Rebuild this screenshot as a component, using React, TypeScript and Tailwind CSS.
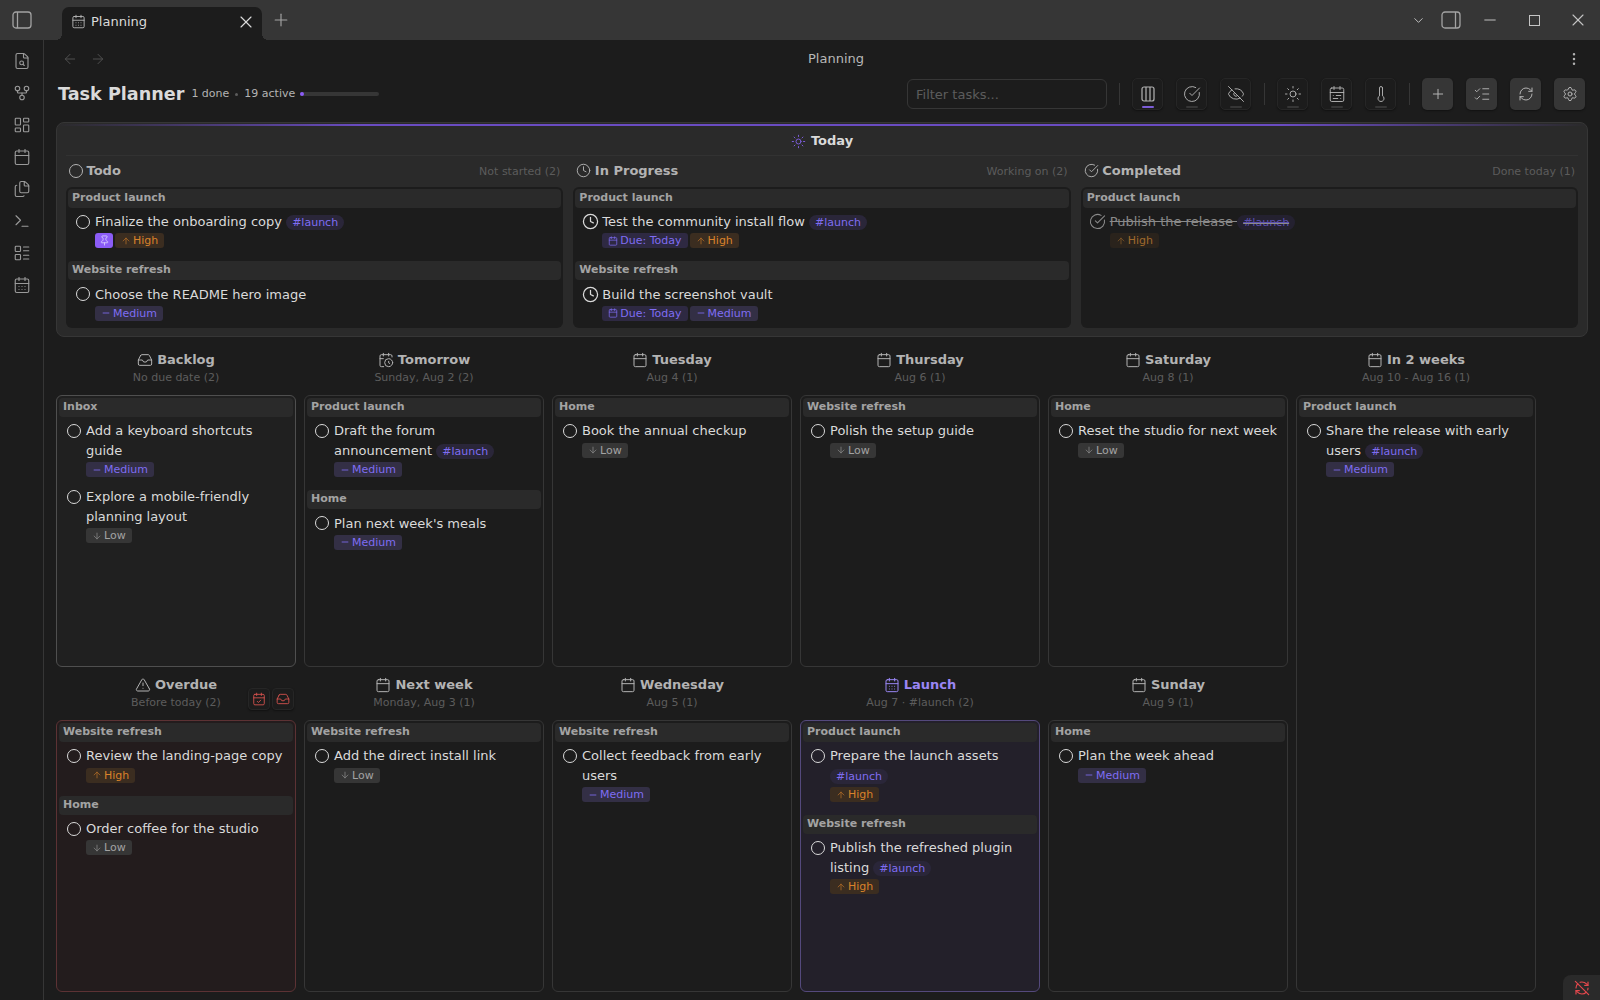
import * as React from "react";
import {
  AlertTriangle,
  ArrowDown,
  ArrowLeft,
  ArrowRight,
  ArrowUp,
  Calendar,
  CalendarCheck,
  CalendarClock,
  CalendarDays,
  CalendarRange,
  ChevronDown,
  CircleCheckBig,
  Clock,
  EllipsisVertical,
  EyeOff,
  FileSearch,
  Files,
  GitFork,
  Inbox,
  LayoutDashboard,
  LayoutList,
  ListChecks,
  Minus,
  Pin,
  Plus,
  RefreshCw,
  RefreshCwOff,
  Settings,
  Sun,
  Terminal,
  Thermometer,
  X,
} from "lucide-react";

type Tag =
  | { kind: "high" | "medium" | "low" | "pin" }
  | { kind: "due"; label: string };

type Task = {
  text: string;
  hash?: boolean;
  tags: Tag[];
  status?: "todo" | "doing" | "done";
};

type Group = { name: string; tasks: Task[] };

const high: Tag = { kind: "high" };
const medium: Tag = { kind: "medium" };
const low: Tag = { kind: "low" };
const due: Tag = { kind: "due", label: "Due: Today" };

function PriorityTag({ tag, dim }: { tag: Tag; dim?: boolean }) {
  const base = "inline-flex h-[15px] items-center gap-[2px] rounded-[3px] px-[6px] text-[11px] leading-none";
  if (tag.kind === "pin") {
    return (
      <span className="inline-flex h-[15px] w-[18px] items-center justify-center rounded-[3px] bg-[#8b5cf6] text-[#ddd6fe]">
        <Pin size={11} strokeWidth={1.75} />
      </span>
    );
  }
  if (tag.kind === "due") {
    return (
      <span className={`${base} bg-[#2e2942] text-[#7f6df2]`}>
        <Calendar size={10} strokeWidth={1.75} />
        {tag.label}
      </span>
    );
  }
  if (tag.kind === "high") {
    return (
      <span className={`${base} ${dim ? "bg-[#2a231c] text-[#a06a2c]" : "bg-[#3b2d20] text-[#d9822b]"}`}>
        <ArrowUp size={10} strokeWidth={1.75} className="opacity-80" />
        High
      </span>
    );
  }
  if (tag.kind === "medium") {
    return (
      <span className={`${base} bg-[#332f45] text-[#7f6df2]`}>
        <Minus size={10} strokeWidth={2} />
        Medium
      </span>
    );
  }
  return (
    <span className={`${base} bg-[#363636] text-[#a3a3a3]`}>
      <ArrowDown size={10} strokeWidth={1.75} className="opacity-80" />
      Low
    </span>
  );
}

function StatusMark({ status }: { status?: Task["status"] }) {
  if (status === "doing") {
    return <Clock size={17} strokeWidth={1.75} className="absolute left-[6.5px] top-[1.5px] text-[#dadada]" />;
  }
  if (status === "done") {
    return <CircleCheckBig size={17} strokeWidth={1.5} className="absolute left-[6.5px] top-[1.5px] text-[#8a8a8a]" />;
  }
  return <span className="absolute left-[8px] top-[3px] size-[14px] rounded-full border-[1.5px] border-[#dadada]" />;
}

function TaskRow({ task, later }: { task: Task; later?: boolean }) {
  const done = task.status === "done";
  return (
    <div className="relative pb-[6px] pl-[27px] pr-[7px] pt-[4px]">
      <div className="relative">
        <div className="absolute -left-[27px] top-0 size-[20px]">
          <StatusMark status={task.status} />
        </div>
        <div
          className={`relative text-[13px] leading-[19.5px] ${later ? "top-[0.5px]" : ""} ${
            done ? "text-[#8a8a8a] line-through" : "text-[#dadada]"
          }`}
        >
          {task.text}
          {task.hash ? " " : ""}
          {task.hash ? (
            <span
              className={`rounded-full px-[6px] py-[1px] text-[11px] leading-none ${
                done ? "bg-[#242130] text-[#5d4fb0] line-through" : "bg-[#2a2639] text-[#7f6df2]"
              }`}
            >
              #launch
            </span>
          ) : null}
        </div>
        <div className="mt-[2px] flex gap-[2px]">
          {task.tags.map((t, i) => (
            <PriorityTag key={i} tag={t} dim={done} />
          ))}
        </div>
      </div>
    </div>
  );
}

function GroupBlock({ group, later }: { group: Group; later?: boolean }) {
  return (
    <div className="mb-[7px]">
      <div className="flex h-[19px] items-center rounded-[4px] bg-[#2a2a2a] px-[4px] text-[11px] font-bold text-[#a3a3a3]">
        {group.name}
      </div>
      {group.tasks.map((t) => (
        <TaskRow key={t.text} task={t} later={later} />
      ))}
    </div>
  );
}

function Board({ groups, tone }: { groups: Group[]; tone?: "hover" | "late" | "launch" }) {
  const toneClass =
    tone === "hover"
      ? "border-[#4f4f4f] bg-[#202020]"
      : tone === "late"
        ? "border-[#5c3234] bg-[#231c1d]"
        : tone === "launch"
          ? "border-[#54497c] bg-[#23202a]"
          : "border-[#363636] bg-[#1c1c1c]";
  return (
    <div className={`min-h-0 flex-1 rounded-[6px] border p-[2px] ${toneClass}`}>
      {groups.map((g, i) => (
        <GroupBlock key={g.name} group={g} later={i > 0 && tone !== "launch"} />
      ))}
    </div>
  );
}

function DayColumn({
  icon,
  title,
  sub,
  groups,
  tone,
  accent,
  className,
  children,
}: {
  icon: React.ReactNode;
  title: string;
  sub: string;
  groups: Group[];
  tone?: "hover" | "late" | "launch";
  accent?: boolean;
  className?: string;
  children?: React.ReactNode;
}) {
  return (
    <div className={`relative flex min-h-0 flex-col ${className ?? ""}`}>
      <div className="flex h-[53px] flex-col items-center pt-[8.9px]">
        <div
          className={`flex h-[18px] items-center gap-[4px] text-[13px] font-bold ${
            accent ? "text-[#9a86f5]" : "text-[#b3b3b3]"
          }`}
        >
          {icon}
          {title}
        </div>
        <div className="mt-[0.6px] h-[16px] text-[11px] leading-[16px] text-[#5c5c5c]">{sub}</div>
      </div>
      {children}
      <Board groups={groups} tone={tone} />
    </div>
  );
}

function TodayColumn({
  icon,
  title,
  sub,
  groups,
}: {
  icon: React.ReactNode;
  title: string;
  sub: string;
  groups: Group[];
}) {
  return (
    <div className="flex min-w-0 flex-1 flex-col">
      <div className="flex h-[30.6px] items-center justify-between pl-[3px] pr-[3px]">
        <div className="flex items-center gap-[3.5px] pb-[1.5px] text-[13px] font-bold text-[#b3b3b3]">
          {icon}
          {title}
        </div>
        <div className="mt-[1px] text-[11px] text-[#5c5c5c]">{sub}</div>
      </div>
      <div className="h-[141px] rounded-[6px] bg-[#1c1c1c] p-[2px]">
        {groups.map((g, i) => (
          <GroupBlock key={g.name} group={g} later={i > 0} />
        ))}
      </div>
    </div>
  );
}

function ColumnsIcon() {
  return (
    <svg width="14" height="18" viewBox="0 0 14 18" fill="none" stroke="currentColor" strokeWidth="1.2">
      <rect x="1" y="2" width="12" height="14" rx="2" />
      <path d="M5 2v14M9 2v14" />
    </svg>
  );
}

function PaneIcon({ side }: { side: "left" | "right" }) {
  const x = side === "left" ? 5.5 : 14.5;
  return (
    <svg width="20" height="18" viewBox="0 0 20 18" fill="none" stroke="currentColor" strokeWidth="1.3">
      <rect x="1" y="1" width="18" height="16" rx="3" />
      <path d={`M${x} 1v16`} />
    </svg>
  );
}

function ToggleButton({ icon, active }: { icon: React.ReactNode; active?: boolean }) {
  return (
    <div className="relative flex h-[32px] w-[31px] items-center justify-center rounded-[5px] border border-[#262626] bg-[#1c1c1c] pb-[1px] text-[#b3b3b3] shadow-[0_1px_2px_rgba(0,0,0,0.4)]">
      {icon}
      <span
        className={`absolute bottom-[1px] left-[9px] h-[2px] w-[12px] rounded-full ${
          active ? "bg-[#7b5cd6]" : "bg-[#363636]"
        }`}
      />
    </div>
  );
}

function ActionButton({ icon }: { icon: React.ReactNode }) {
  return (
    <div className="flex h-[32px] w-[31px] items-center justify-center rounded-[5px] bg-[#363636] text-[#b3b3b3] shadow-[0_1px_2px_rgba(0,0,0,0.4)]">
      {icon}
    </div>
  );
}

function Divider() {
  return <div className="h-[22px] w-px bg-[#363636]" />;
}

const ribbon = [FileSearch, GitFork, LayoutDashboard, Calendar, Files, Terminal, LayoutList, CalendarDays];

export default function App() {
  const cal = <Calendar size={16} strokeWidth={1.5} />;
  return (
    <div className="relative flex h-[1000px] w-[1600px] flex-col overflow-hidden bg-[#1c1c1c] font-['DejaVu_Sans',sans-serif]">
      {/* title bar */}
      <div className="flex h-[40px] shrink-0 items-end bg-[#363636]">
        <div className="flex h-[40px] w-[62px] items-center justify-center pr-[18px] text-[#a3a3a3]">
          <PaneIcon side="left" />
        </div>
        <div className="relative flex h-[33px] w-[200px] items-center rounded-t-[7px] bg-[#1c1c1c] pb-[4px] pl-[9px] pr-[6px] text-[#dadada]">
          <span className="absolute -left-[6px] bottom-0 size-[6px] bg-[radial-gradient(circle_at_0_0,transparent_6px,#1c1c1c_6px)]" />
          <span className="absolute -right-[6px] bottom-0 size-[6px] bg-[radial-gradient(circle_at_100%_0,transparent_6px,#1c1c1c_6px)]" />
          <CalendarDays size={15} strokeWidth={1.5} className="text-[#b3b3b3]" />
          <span className="ml-[5px] flex-1 text-[13px]">Planning</span>
          <X size={20} strokeWidth={1.4} />
        </div>
        <div className="flex h-[40px] w-[38px] items-center justify-center text-[#a3a3a3]">
          <Plus size={20} strokeWidth={1.4} />
        </div>
        <div className="flex h-[40px] flex-1 items-center justify-end text-[#c4c4c4]">
          <ChevronDown size={15} strokeWidth={1.5} className="mr-[15px]" />
          <div className="mr-[20px] text-[#a3a3a3]">
            <PaneIcon side="right" />
          </div>
          <Minus size={18} strokeWidth={1.3} className="mr-[30px]" />
          <span className="mr-[28px] size-[11px] border-[1.5px] border-[#c4c4c4]" />
          <X size={20} strokeWidth={1.3} className="mr-[12px]" />
        </div>
      </div>

      <div className="flex min-h-0 flex-1">
        {/* ribbon */}
        <div className="flex w-[44px] shrink-0 flex-col items-center gap-[14px] border-r border-[#363636] pt-[12px] text-[#9a9a9a]">
          {ribbon.map((Icon, i) => (
            <Icon key={i} size={18} strokeWidth={1.5} />
          ))}
        </div>

        <div className="min-w-0 flex-1">
          {/* nav */}
          <div className="flex h-[38px] items-center text-[13px] text-[#b8b8b8]">
            <div className="ml-[18px] mr-[6px] flex w-[44px] gap-[12px] text-[#4f4f4f]">
              <ArrowLeft size={16} strokeWidth={1.5} />
              <ArrowRight size={16} strokeWidth={1.5} />
            </div>
            <div className="flex-1 text-center">Planning</div>
            <div className="w-[40px] pl-[6px] text-[#b3b3b3]">
              <EllipsisVertical size={16} strokeWidth={1.75} />
            </div>
          </div>

          {/* toolbar */}
          <div className="flex h-[32px] items-center pl-[14px] pr-[15px]">
            <div className="mt-[1px] text-[17.6px] font-bold text-[#dadada]">Task Planner</div>
            <div className="ml-[7px] flex items-center text-[11px] text-[#b3b3b3]">
              <span>1 done</span>
              <span className="mx-[6px] size-[3px] rounded-full bg-[#5c5c5c]" />
              <span>19 active</span>
              <span className="ml-[5px] h-[4px] w-[79px] rounded-full bg-[#363636]">
                <span className="block h-[4px] w-[3.5px] rounded-full bg-[#8b5cf6]" />
              </span>
            </div>
            <div className="ml-auto flex items-center gap-[12.5px]">
              <input
                placeholder="Filter tasks..."
                className="-mr-[1px] h-[30px] w-[200px] rounded-[6px] border border-[#363636] bg-transparent px-[8px] text-[13px] text-[#dadada] outline-none placeholder:text-[#5c5c5c]"
              />
              <Divider />
              <div className="flex gap-[13px]">
                <ToggleButton active icon={<ColumnsIcon />} />
                <ToggleButton icon={<CircleCheckBig size={18} strokeWidth={1.25} />} />
                <ToggleButton icon={<EyeOff size={18} strokeWidth={1.25} />} />
              </div>
              <Divider />
              <div className="flex gap-[13px]">
                <ToggleButton icon={<Sun size={18} strokeWidth={1.25} />} />
                <ToggleButton icon={<CalendarRange size={18} strokeWidth={1.25} />} />
                <ToggleButton icon={<Thermometer size={18} strokeWidth={1.25} />} />
              </div>
              <Divider />
              <div className="flex gap-[13px]">
                <ActionButton icon={<Plus size={16} strokeWidth={1.5} />} />
                <ActionButton icon={<ListChecks size={18} strokeWidth={1.25} />} />
                <ActionButton icon={<RefreshCw size={16} strokeWidth={1.5} />} />
                <ActionButton icon={<Settings size={16} strokeWidth={1.5} />} />
              </div>
            </div>
          </div>

          {/* today */}
          <div className="relative ml-[12px] mt-[12px] h-[215px] w-[1532px] rounded-[8px] border border-[#363636] bg-[#2a2a2a] px-[9px]">
            <div className="absolute inset-x-0 top-[1px] h-[2px] bg-[linear-gradient(90deg,transparent,#6a4cc2_20%,#6a4cc2_80%,transparent)]" />
            <div className="flex h-[33px] items-center justify-center gap-[5px] border-b border-[#323232] pt-[4px] text-[13px] font-bold text-[#dadada]">
              <Sun size={15} strokeWidth={1.5} className="text-[#7f5fe0]" />
              Today
            </div>
            <div className="flex gap-[10px]">
              <TodayColumn
                icon={<span className="size-[14px] rounded-full border-[1.25px] border-[#b3b3b3]" />}
                title="Todo"
                sub="Not started (2)"
                groups={[
                  {
                    name: "Product launch",
                    tasks: [{ text: "Finalize the onboarding copy", hash: true, tags: [{ kind: "pin" }, high] }],
                  },
                  { name: "Website refresh", tasks: [{ text: "Choose the README hero image", tags: [medium] }] },
                ]}
              />
              <TodayColumn
                icon={<Clock size={15} strokeWidth={1.5} />}
                title="In Progress"
                sub="Working on (2)"
                groups={[
                  {
                    name: "Product launch",
                    tasks: [{ text: "Test the community install flow", hash: true, tags: [due, high], status: "doing" }],
                  },
                  {
                    name: "Website refresh",
                    tasks: [{ text: "Build the screenshot vault", tags: [due, medium], status: "doing" }],
                  },
                ]}
              />
              <TodayColumn
                icon={<CircleCheckBig size={15} strokeWidth={1.5} />}
                title="Completed"
                sub="Done today (1)"
                groups={[
                  {
                    name: "Product launch",
                    tasks: [{ text: "Publish the release", hash: true, tags: [high], status: "done" }],
                  },
                ]}
              />
            </div>
          </div>

          {/* week grid */}
          <div className="ml-[12px] mt-[5.1px] grid grid-cols-[repeat(6,240px)] grid-rows-[325px_325px] gap-x-[8px]">
            <DayColumn
              icon={<Inbox size={16} strokeWidth={1.5} />}
              title="Backlog"
              sub="No due date (2)"
              tone="hover"
              groups={[
                {
                  name: "Inbox",
                  tasks: [
                    { text: "Add a keyboard shortcuts guide", tags: [medium] },
                    { text: "Explore a mobile-friendly planning layout", tags: [low] },
                  ],
                },
              ]}
            />
            <DayColumn
              icon={<CalendarClock size={16} strokeWidth={1.5} />}
              title="Tomorrow"
              sub="Sunday, Aug 2 (2)"
              groups={[
                { name: "Product launch", tasks: [{ text: "Draft the forum announcement", hash: true, tags: [medium] }] },
                { name: "Home", tasks: [{ text: "Plan next week's meals", tags: [medium] }] },
              ]}
            />
            <DayColumn
              icon={cal}
              title="Tuesday"
              sub="Aug 4 (1)"
              groups={[{ name: "Home", tasks: [{ text: "Book the annual checkup", tags: [low] }] }]}
            />
            <DayColumn
              icon={cal}
              title="Thursday"
              sub="Aug 6 (1)"
              groups={[{ name: "Website refresh", tasks: [{ text: "Polish the setup guide", tags: [low] }] }]}
            />
            <DayColumn
              icon={cal}
              title="Saturday"
              sub="Aug 8 (1)"
              groups={[{ name: "Home", tasks: [{ text: "Reset the studio for next week", tags: [low] }] }]}
            />
            <DayColumn
              className="row-span-2"
              icon={cal}
              title="In 2 weeks"
              sub="Aug 10 - Aug 16 (1)"
              groups={[
                {
                  name: "Product launch",
                  tasks: [{ text: "Share the release with early users", hash: true, tags: [medium] }],
                },
              ]}
            />
            <DayColumn
              icon={<AlertTriangle size={16} strokeWidth={1.5} />}
              title="Overdue"
              sub="Before today (2)"
              tone="late"
              groups={[
                { name: "Website refresh", tasks: [{ text: "Review the landing-page copy", tags: [high] }] },
                { name: "Home", tasks: [{ text: "Order coffee for the studio", tags: [low] }] },
              ]}
            >
              <div className="absolute right-[2px] top-[21px] flex gap-[2px] text-[#d9534f]">
                <span className="flex size-[22px] items-center justify-center rounded-[4px] border border-[#262626] bg-[#1c1c1c] shadow-[0_1px_2px_rgba(0,0,0,0.4)]">
                  <CalendarCheck size={14} strokeWidth={1.5} />
                </span>
                <span className="flex size-[22px] items-center justify-center rounded-[4px] border border-[#262626] bg-[#1c1c1c] shadow-[0_1px_2px_rgba(0,0,0,0.4)]">
                  <Inbox size={14} strokeWidth={1.5} />
                </span>
              </div>
            </DayColumn>
            <DayColumn
              icon={cal}
              title="Next week"
              sub="Monday, Aug 3 (1)"
              groups={[{ name: "Website refresh", tasks: [{ text: "Add the direct install link", tags: [low] }] }]}
            />
            <DayColumn
              icon={cal}
              title="Wednesday"
              sub="Aug 5 (1)"
              groups={[
                { name: "Website refresh", tasks: [{ text: "Collect feedback from early users", tags: [medium] }] },
              ]}
            />
            <DayColumn
              icon={<CalendarDays size={16} strokeWidth={1.5} />}
              title="Launch"
              sub="Aug 7 · #launch (2)"
              tone="launch"
              accent
              groups={[
                { name: "Product launch", tasks: [{ text: "Prepare the launch assets", hash: true, tags: [high] }] },
                {
                  name: "Website refresh",
                  tasks: [{ text: "Publish the refreshed plugin listing", hash: true, tags: [high] }],
                },
              ]}
            />
            <DayColumn
              icon={cal}
              title="Sunday"
              sub="Aug 9 (1)"
              groups={[{ name: "Home", tasks: [{ text: "Plan the week ahead", tags: [medium] }] }]}
            />
          </div>
        </div>
      </div>

      {/* status bar */}
      <div className="absolute bottom-0 right-0 flex h-[25px] w-[37px] items-center justify-center rounded-tl-[8px] bg-[#2a2a2a] text-[#e5484d]">
        <RefreshCwOff size={16} strokeWidth={1.75} />
      </div>
    </div>
  );
}
